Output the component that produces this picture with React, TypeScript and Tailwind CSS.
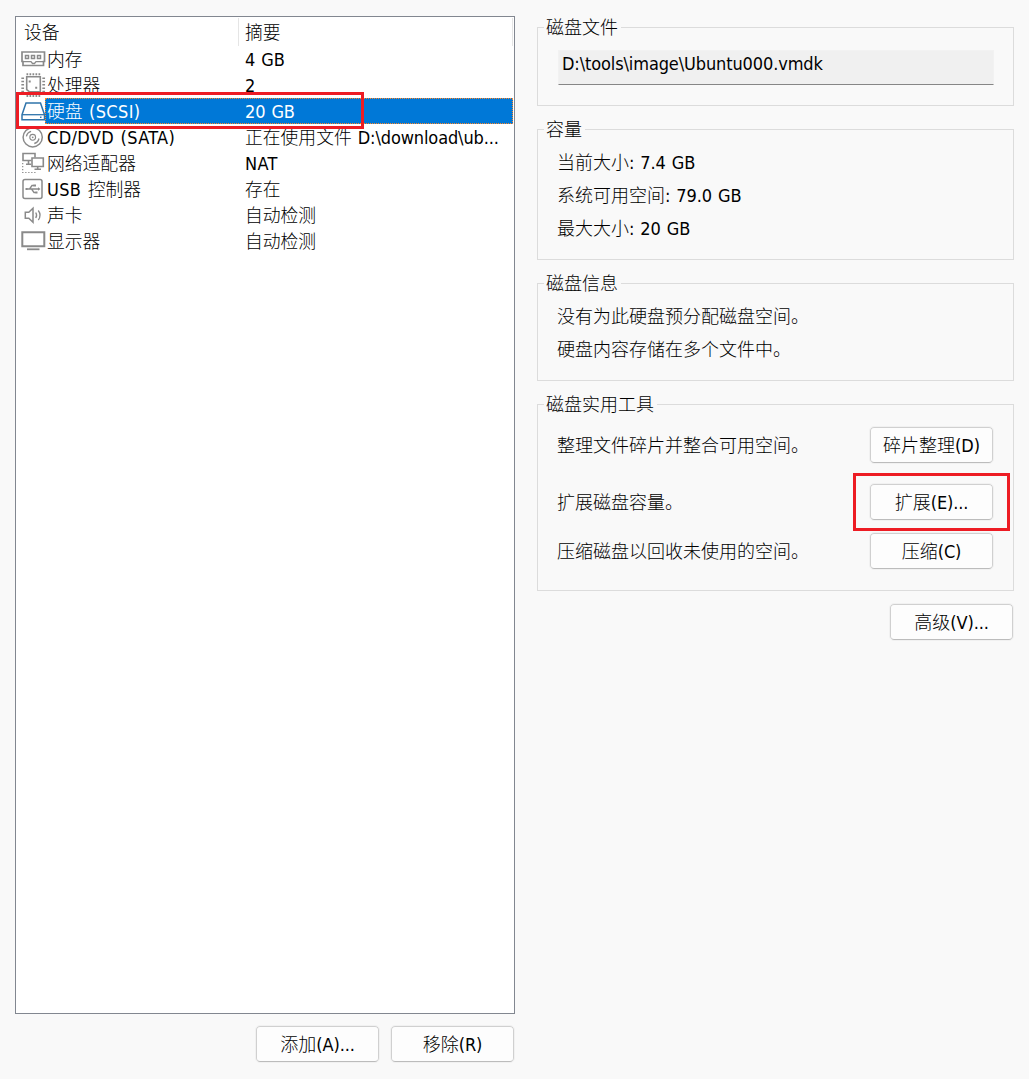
import type { ReactNode } from "react";
import clsx from "clsx";

const icons: Record<string, ReactNode> = {
  memory: (
    <>
      <path d="M1 6h22.5v9.5h-1v4h-20.5v-4h-1z" strokeWidth="1.7" />
      <path d="M4.5 9.5h3v3h-3zM10.5 9.5h3v3h-3zM16.5 9.5h3v3h-3z" strokeWidth="1.5" />
      <path d="M2 15.7h8l1.5 1.8h2l1.5-1.8h7.5" strokeWidth="1.3" />
    </>
  ),
  cpu: (
    <>
      <path d="M5.7 4.8h13.6v14.9H8.2l-2.5-2z" strokeWidth="1.6" />
      <path d="M5.5 2.3h14M5.5 24h14" strokeWidth="2" strokeDasharray="1.7 1.3" />
      <path d="M1.7 5.5v15M22.7 5.5v15" strokeWidth="2.7" strokeDasharray="1.5 1.8" />
      <path d="M7.7 9.5h2M14.2 15.8h2" strokeWidth="2" />
    </>
  ),
  disk: (
    <>
      <path d="M1 16.7L5 5h14.5l4 11.7v5h-22.5z" fill="#fff" strokeWidth="1.5" />
      <path d="M1 16.7h22.5" strokeWidth="1.3" />
      <path d="M19 19.3h1.5" strokeWidth="1.5" />
    </>
  ),
  disc: (
    <>
      <circle cx="11.7" cy="13.3" r="9.6" strokeWidth="1.5" />
      <circle cx="11.7" cy="13.3" r="2.9" strokeWidth="1.1" />
      <path d="M5.4 12.3a6.5 6.5 0 0 1 4.7-5M18 14.5a6.5 6.5 0 0 1-4.7 5" strokeWidth="1.3" />
      <circle cx="11.7" cy="13.3" r="0.9" fill="currentColor" stroke="none" />
    </>
  ),
  network: (
    <>
      <path d="M10.5 10.5H2V3.5h12v4M7.5 10.5v3.5M5 14.3h5" strokeWidth="1.6" />
      <path d="M11 8h11.3v8.5H11zM16.7 16.5v3M13.5 19.3h6.5" strokeWidth="1.6" />
      <path d="M1.7 13v9.5h13" strokeWidth="1.2" strokeDasharray="1.3 1.7" />
    </>
  ),
  usb: (
    <>
      <rect x="2" y="3.5" width="19" height="19" rx="2" strokeWidth="1.5" />
      <path d="M5.5 13H18M8.5 13l2.5-3.5h2M10.5 13l2.5 3.5h2" strokeWidth="1.3" />
      <path
        d="M12.5 8.5h2.5v2h-2.5zM14.5 15.5h2v2h-2zM4.5 12h2v2h-2zM17 11.3l2.5 1.7-2.5 1.7z"
        fill="currentColor"
        stroke="none"
      />
    </>
  ),
  sound: (
    <>
      <path d="M4.3 10.3h3.5l4.2-4v14l-4.2-4h-3.5z" strokeWidth="1.5" />
      <path d="M14.7 10.5q1.8 2.7 0 5.5M17.3 8.5q3.5 4.7 0 9.5" strokeWidth="1.3" />
    </>
  ),
  display: (
    <>
      <path d="M1.3 4.3h22v14h-22z" strokeWidth="2" />
      <path d="M6 21.3h12.5" strokeWidth="1.8" />
    </>
  ),
};

const devices = [
  { icon: "memory", name: "内存", summary: "4 GB" },
  { icon: "cpu", name: "处理器", summary: "2" },
  { icon: "disk", name: "硬盘 (SCSI)", summary: "20 GB", selected: true },
  { icon: "disc", name: "CD/DVD (SATA)", summary: "正在使用文件 D:\\download\\ub..." },
  { icon: "network", name: "网络适配器", summary: "NAT" },
  { icon: "usb", name: "USB 控制器", summary: "存在" },
  { icon: "sound", name: "声卡", summary: "自动检测" },
  { icon: "display", name: "显示器", summary: "自动检测" },
];

// Latin runs use the interface font, CJK runs keep the lighter one.
// Acronyms are spaced a little wider.
function Label({ text }: { text: string }) {
  return (
    <>
      {text.split(/([\x20-\x7e]+)/).map((part, i) =>
        i % 2 ? (
          <span
            key={i}
            className={clsx(
              "font-['DejaVu_Sans_Condensed','DejaVu_Sans',sans-serif] text-[18px] leading-none font-normal [font-stretch:condensed] [word-spacing:1px]",
              /[A-Z]{3}/.test(part) ? "tracking-[0.35px]" : "tracking-[-0.12px]"
            )}
          >
            {part}
          </span>
        ) : (
          part
        )
      )}
    </>
  );
}

function Button({ label, className }: { label: string; className?: string }) {
  return (
    <button
      className={clsx(
        "h-9 w-[123px] shrink-0 whitespace-pre rounded border border-[#d0d0d0] border-b-[#bcbcbc] bg-[#fdfdfd] pb-[2px] text-center leading-8 outline outline-[#f1f1f1]",
        className
      )}
    >
      <Label text={label} />
    </button>
  );
}

function Group({ title, className, children }: { title: string; className?: string; children: ReactNode }) {
  return (
    <fieldset className={clsx("mb-[13px] w-[477px] border border-[#dcdcdc] pl-[19px] pr-5", className)}>
      <legend className="-ml-[13px] h-[21px] pl-[2px] pr-[3px] leading-[19px]">{title}</legend>
      {children}
    </fieldset>
  );
}

export default function App() {
  return (
    <div className="flex h-[1079px] w-[1029px] bg-[#f9f9f9] font-['Noto_Sans_CJK_SC',sans-serif] text-[18px] font-light text-black">
      <div className="ml-[15px] w-[500px] pt-4">
        <div className="h-[998px] border border-[#828790] bg-white text-[17.8px]">
          <div className="flex h-[29px] pt-px leading-[27px]">
            <div className="h-7 w-[223px] border-r border-[#e5e5e5] pl-[8px]">设备</div>
            <div className="h-7 w-[274px] border-r border-[#e5e5e5] pl-[6px]">摘要</div>
          </div>
          {devices.map((device) => (
            <div key={device.name} className="relative flex h-[26px] pl-[5px] pr-px leading-[24px]">
              <svg
                viewBox="0 0 24 26"
                fill="none"
                stroke="currentColor"
                className={clsx(
                  "h-[26px] w-6 shrink-0 overflow-visible",
                  device.selected ? "text-[#2f74ab]" : "text-[#8a8a8a]"
                )}
              >
                {icons[device.icon]}
              </svg>
              <div
                className={clsx(
                  "flex flex-1 whitespace-pre",
                  device.selected &&
                    "bg-[#0078d7] text-white outline-1 -outline-offset-1 outline-dotted outline-[#ff8728]"
                )}
              >
                <div className="w-[200px] pl-[2px]">
                  <Label text={device.name} />
                </div>
                <div>
                  <Label text={device.summary} />
                </div>
              </div>
              {device.selected && (
                <div className="absolute -top-1.5 left-0 z-10 h-[37px] w-[348px] border-3 border-[#ed1c24]" />
              )}
            </div>
          ))}
        </div>
        <div className="mt-3 flex justify-end gap-3 pr-px">
          <Button label="添加(A)..." />
          <Button label="移除(R)" />
        </div>
      </div>

      <div className="ml-[22px] pt-[17px]">
        <Group title="磁盘文件" className="h-[89px]">
          <div className="-mr-px ml-px mt-3 h-[35px] border border-[#f2f2f2] border-b-[#868686] bg-[#f0f0f0] pl-[3px] leading-[23px]">
            <Label text="D:\tools\image\Ubuntu000.vmdk" />
          </div>
        </Group>
        <Group title="容量" className="h-[141px] leading-[33px]">
          <div className="mt-[5px]">
            <Label text="当前大小: 7.4 GB" />
          </div>
          <div>
            <Label text="系统可用空间: 79.0 GB" />
          </div>
          <div>
            <Label text="最大大小: 20 GB" />
          </div>
        </Group>
        <Group title="磁盘信息" className="h-[108px] leading-[33px]">
          <div className="mt-[5px]">没有为此硬盘预分配磁盘空间。</div>
          <div>硬盘内容存储在多个文件中。</div>
        </Group>
        <Group title="磁盘实用工具" className="h-[197px] leading-[34px]">
          <div className="mt-3 flex justify-between">
            <div>整理文件碎片并整合可用空间。</div>
            <Button label="碎片整理(D)" />
          </div>
          <div className="mt-[21px] flex justify-between">
            <div>扩展磁盘容量。</div>
            <div className="relative">
              <Button label="扩展(E)..." className="block" />
              <div className="absolute -left-[17px] -top-[11px] h-[58px] w-[157px] border-3 border-[#ed1c24]" />
            </div>
          </div>
          <div className="mt-[13px] flex justify-between">
            <div>压缩磁盘以回收未使用的空间。</div>
            <Button label="压缩(C)" />
          </div>
        </Group>
        <div className="flex justify-end pr-px">
          <Button label="高级(V)..." />
        </div>
      </div>
    </div>
  );
}
